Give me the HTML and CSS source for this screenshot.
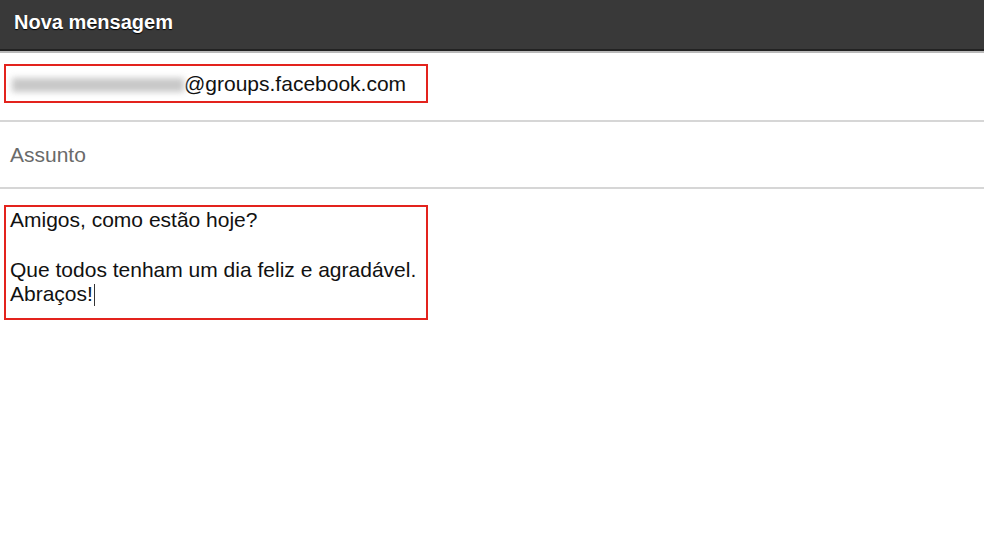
FILE: index.html
```html
<!DOCTYPE html>
<html lang="pt">
<head>
  <meta charset="UTF-8">
  <title>Nova mensagem</title>
  <link rel="stylesheet" href="styles.css">
</head>
<body>
  <div class="compose">
    <div class="compose-header">Nova mensagem</div>
    <div class="compose-row compose-to">
      <div class="mark-box to-box">
        <span class="blurred"></span><span class="addr">@groups.facebook.com</span>
      </div>
    </div>
    <div class="compose-row compose-subject">
      <span class="placeholder">Assunto</span>
    </div>
    <div class="compose-body">
      <div class="mark-box body-box">
        <p>Amigos, como estão hoje?</p>
        <p class="gap">Que todos tenham um dia feliz e agradável.</p>
        <p>Abraços!<span class="caret"></span></p>
      </div>
    </div>
  </div>
</body>
</html>
```

FILE: styles.css
```css
body {
  margin: 0;
  background: #fff;
  font-family: "Liberation Sans", Arial, sans-serif;
  color: #111;
}
.compose-header {
  height: 49px;
  background: #393939;
  color: #fff;
  font-weight: bold;
  font-size: 20px;
  line-height: 44px;
  padding-left: 14px;
  text-shadow: 0 1px 1px #000;
  border-bottom: 2px solid #222;
  box-shadow: 0 2px 0 #b9b9b9;
}
.compose-row {
  border-bottom: 2px solid #d6d6d6;
}
.compose-to {
  height: 71px;
  padding: 13px 0 0 4px;
  box-sizing: border-box;
}
.mark-box {
  border: 2px solid #e3231d;
  width: 424px;
  box-sizing: border-box;
}
.to-box {
  height: 39px;
  display: flex;
  align-items: center;
  padding-left: 6px;
  font-size: 21px;
}
.blurred {
  display: inline-block;
  width: 172px;
  height: 14px;
  background: #c8c8c8;
  filter: blur(3px);
  margin-top: 2px;
}
.addr {
  margin-top: 1px;
}
.compose-subject {
  height: 65px;
  display: flex;
  align-items: center;
  padding-left: 10px;
}
.placeholder {
  color: #6a6a6a;
  font-size: 21px;
}
.compose-body {
  padding: 16px 0 0 4px;
}
.body-box {
  height: 115px;
  padding: 1px 0 0 4px;
  font-size: 21px;
  line-height: 24px;
}
.body-box p {
  margin: 0;
}
.body-box .gap {
  margin-top: 26px;
}
.caret {
  display: inline-block;
  width: 1px;
  height: 22px;
  background: #333;
  vertical-align: -5px;
  margin-left: 1px;
}
```
